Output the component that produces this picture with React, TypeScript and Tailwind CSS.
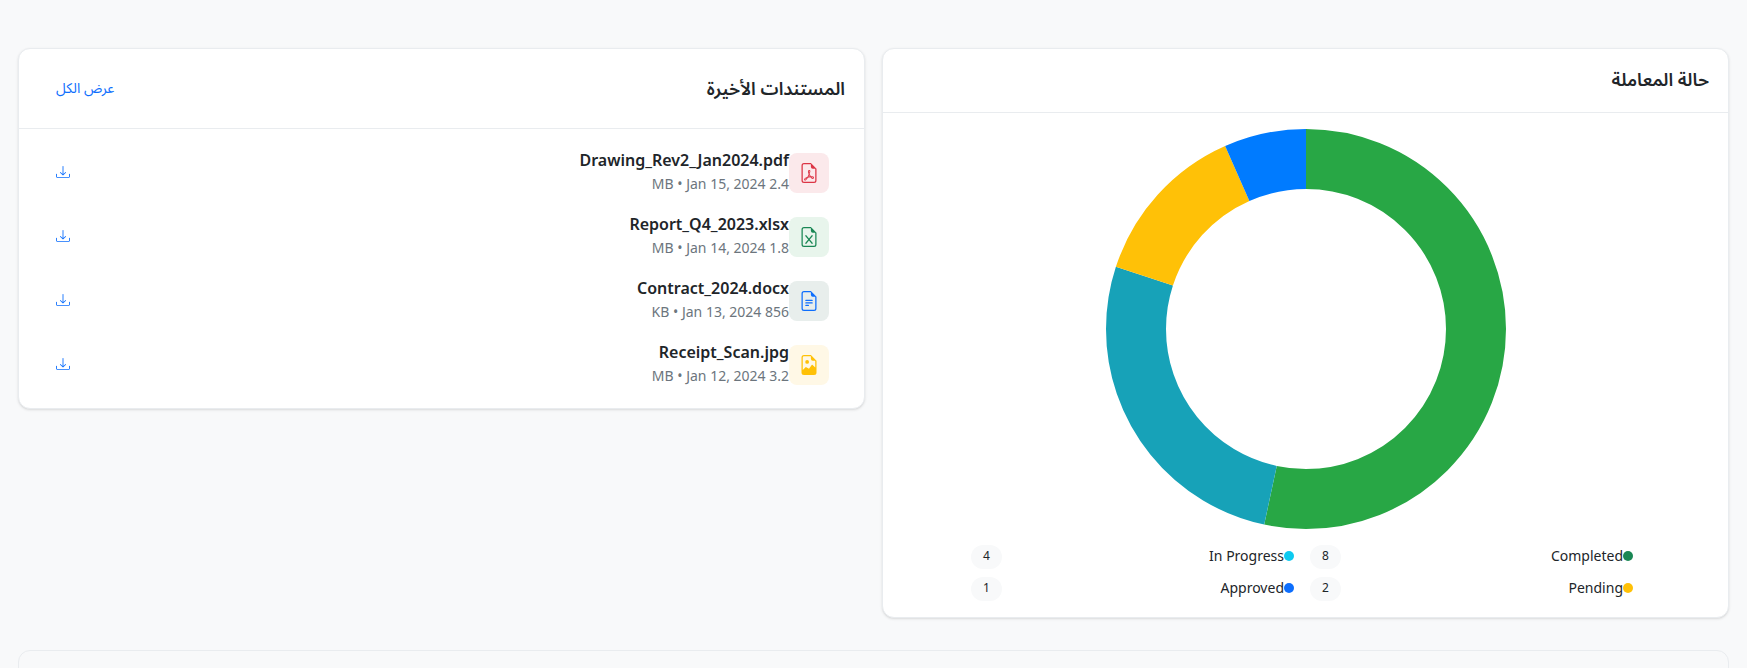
import {
  BsDownload,
  BsFileEarmarkExcel,
  BsFileEarmarkImage,
  BsFileEarmarkPdf,
  BsFileEarmarkText,
} from "react-icons/bs";

const documents = [
  {
    icon: BsFileEarmarkPdf,
    color: "text-[#dc3545]",
    bg: "bg-[#fbe9eb]",
    name: "Drawing_Rev2_Jan2024.pdf",
    meta: "2.4 MB • Jan 15, 2024",
  },
  {
    icon: BsFileEarmarkExcel,
    color: "text-[#198754]",
    bg: "bg-[#e8f5ec]",
    name: "Report_Q4_2023.xlsx",
    meta: "1.8 MB • Jan 14, 2024",
  },
  {
    icon: BsFileEarmarkText,
    color: "text-[#0d6efd]",
    bg: "bg-[#e8eeec]",
    name: "Contract_2024.docx",
    meta: "856 KB • Jan 13, 2024",
  },
  {
    icon: BsFileEarmarkImage,
    color: "text-[#ffc107]",
    bg: "bg-[#fff8e6]",
    name: "Receipt_Scan.jpg",
    meta: "3.2 MB • Jan 12, 2024",
  },
];

const legend = [
  { label: "Completed", count: 8, dot: "bg-[#198754]" },
  { label: "In Progress", count: 4, dot: "bg-[#0dcaf0]" },
  { label: "Pending", count: 2, dot: "bg-[#ffc107]" },
  { label: "Approved", count: 1, dot: "bg-[#0d6efd]" },
];

const slices = [
  { value: 8, color: "#28a745" },
  { value: 4, color: "#17a2b8" },
  { value: 2, color: "#ffc107" },
  { value: 1, color: "#007bff" },
];

function Donut() {
  const total = slices.reduce((sum, s) => sum + s.value, 0);
  const r = 170;
  const c = 2 * Math.PI * r;
  let offset = 0;
  return (
    <svg width="400" height="400" viewBox="0 0 400 400" className="block -rotate-90">
      {slices.map((s) => {
        const len = (s.value / total) * c;
        const el = (
          <circle
            key={s.color}
            cx="200"
            cy="200"
            r={r}
            fill="none"
            stroke={s.color}
            strokeWidth="60"
            strokeDasharray={`${len} ${c - len}`}
            strokeDashoffset={-offset}
          />
        );
        offset += len;
        return el;
      })}
    </svg>
  );
}

export default function App() {
  return (
    <div
      dir="rtl"
      className="h-[668px] overflow-hidden bg-[#f8f9fa] px-[18px] pt-[48px] font-['Noto_Sans','Noto_Sans_Arabic',sans-serif] text-[#212529]"
    >
      <div className="grid grid-cols-2 items-start gap-[17px]">
        <section className="h-[570px] rounded-xl border border-[#e9ecef] bg-white shadow-sm">
          <div className="flex h-[64px] items-center border-b border-[#e9ecef] pb-[3px] pl-5 pr-[19px]">
            <h2 className="text-lg font-semibold">حالة المعاملة</h2>
          </div>
          <div className="flex justify-center pt-4">
            <Donut />
          </div>
          <div className="mt-4 grid grid-cols-2 gap-x-4 gap-y-2 pl-[88px] pr-[95px]">
            {legend.map((item) => (
              <div key={item.label} className="flex h-6 items-center justify-between">
                <div className="-mt-0.5 flex items-center">
                  <span className={`h-2.5 w-2.5 rounded-full ${item.dot}`} />
                  <span className="text-sm">{item.label}</span>
                </div>
                <span className="flex h-6 w-[31px] items-center justify-center rounded-full bg-[#f8f9fa] pb-0.5 text-xs">
                  {item.count}
                </span>
              </div>
            ))}
          </div>
        </section>

        <section className="h-[361px] rounded-xl border border-[#e9ecef] bg-white shadow-sm">
          <div className="flex h-[80px] items-center justify-between border-b border-[#e9ecef] pb-0.5 pl-[37px] pr-[19px]">
            <h2 className="text-lg font-semibold">المستندات الأخيرة</h2>
            <a className="text-sm text-[#0d6efd]">عرض الكل</a>
          </div>
          <ul className="flex flex-col gap-6 py-6 pl-[37px] pr-[35px]">
            {documents.map((doc) => (
              <li key={doc.name} className="flex h-10 items-center">
                <div className={`flex h-10 w-10 shrink-0 items-center justify-center rounded-lg ${doc.bg}`}>
                  <doc.icon className={`h-5 w-5 ${doc.color}`} />
                </div>
                <div className="-mt-[5px] flex-1 self-start">
                  <div className="text-base font-semibold leading-6">{doc.name}</div>
                  <div className="mt-px text-sm leading-[21px] text-[#6c757d]">{doc.meta}</div>
                </div>
                <BsDownload className="-mt-0.5 h-3.5 w-3.5 text-[#0d6efd]" />
              </li>
            ))}
          </ul>
        </section>
      </div>
      <div className="mt-8 h-[100px] rounded-xl border border-[#e9ecef] bg-[#f8f9fa]" />
    </div>
  );
}
